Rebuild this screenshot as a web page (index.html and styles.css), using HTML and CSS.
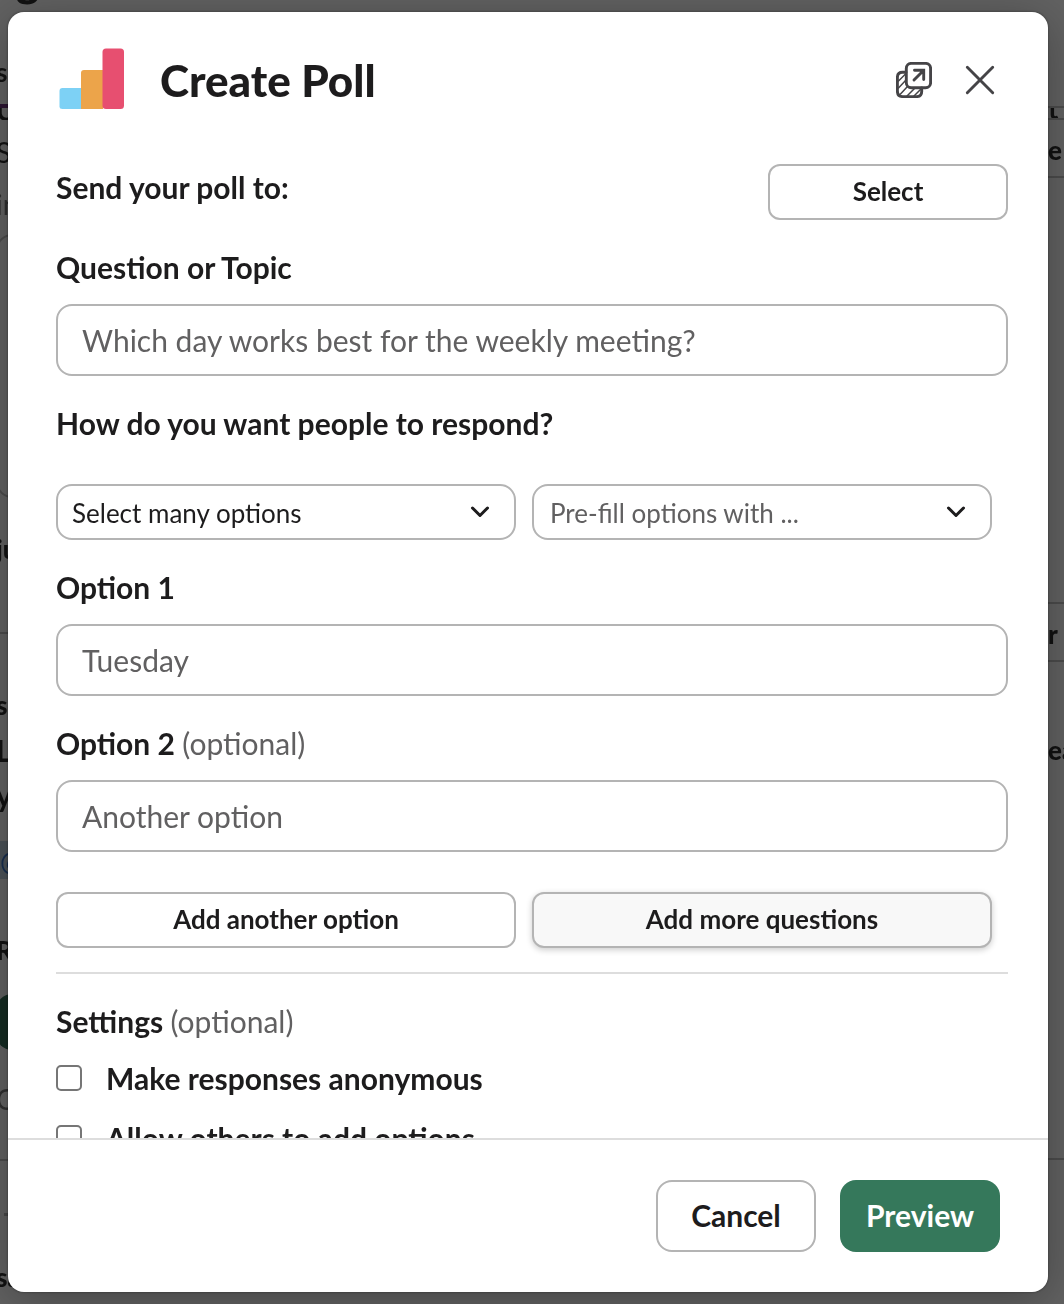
FILE: index.html
```html
<!DOCTYPE html>
<html lang="en">
<head>
  <meta charset="UTF-8">
  <meta name="viewport" content="width=device-width, initial-scale=1.0">
  <title>Create Poll</title>
  <link rel="stylesheet" href="styles.css">
</head>
<body>
  <!-- Dimmed page under the dialog -->
  <div class="page" aria-hidden="true">
    <div class="page-left">
      <div class="page-name">g</div>
      <div class="tab">ss</div>
      <div class="cut"><span>U</span></div>
      <div class="regular">S</div>
      <div class="muted">in</div>
      <div class="box"></div>
      <div class="strong">ju</div>
      <div class="line"></div>
      <div class="strong">s</div>
      <div class="medium">L</div>
      <div class="medium">y</div>
      <div class="mention">@</div>
      <div class="strong">R</div>
      <div class="green"></div>
      <div class="muted">C</div>
      <div class="composer"><span class="dash"></span></div>
      <div class="strong">sa</div>
    </div>
    <div class="page-right">
      <div class="line"></div>
      <div class="cut line"><span>t</span></div>
      <div class="strong line low">e</div>
      <div class="line"></div>
      <div class="strong line low">r</div>
      <div></div>
      <div class="strong">ea</div>
      <div class="line"></div>
      <div></div>
    </div>
  </div>

  <form class="modal" role="dialog" aria-labelledby="title">
    <header class="modal-header">
      <svg class="logo" viewBox="-1 0 66 64" aria-hidden="true">
        <path d="M22 40H3.500Q.5 40 .5 43V58.500Q.5 61 3.500 61H22Z" fill="#7dd1f5"/>
        <path d="M44 22H25Q22 22 22 25V61H44Z" fill="#eca44a"/>
        <rect x="43.500" y=".5" width="21.500" height="60.500" rx="3.500" fill="#e74f70"/>
      </svg>
      <h1 id="title">Create Poll</h1>
      <button class="icon-btn" type="button" aria-label="Open in new window">
        <svg width="36" height="36" viewBox="0 0 36 36" fill="none" stroke="#454447" stroke-width="2.900" stroke-linecap="round" stroke-linejoin="round">
          <path d="M10 10.300H6.500Q1.400 10.300 1.400 15.500V29Q1.400 34.600 7 34.600H20.500Q25.700 34.600 25.700 29.500V26"/>
          <path d="M2.500 19 10 11.500M2.500 26 10 18M4.500 32 11.500 24.500M11 34 18.500 26.500M18 34 25 27" stroke-width="1.500"/>
          <rect x="10.300" y="1.400" width="24.300" height="24.300" rx="5"/>
          <path d="M18 18 27.500 8.500M18.500 8.300H27.700V17.500" stroke-linejoin="miter"/>
        </svg>
      </button>
      <button class="icon-btn" type="button" aria-label="Close">
        <svg width="36" height="36" viewBox="0 0 36 36" fill="none" stroke="#454447" stroke-width="2.900" stroke-linecap="round">
          <path d="M5.300 5.300 30.700 30.700M30.700 5.300 5.300 30.700"/>
        </svg>
      </button>
    </header>

    <div class="modal-body">
      <div class="send-row">
        <span class="label">Send your poll to:</span>
        <button class="btn" type="button">Select</button>
      </div>

      <label class="label" for="question">Question or Topic</label>
      <input class="text" type="text" id="question" placeholder="Which day works best for the weekly meeting?">

      <label class="label" for="respond">How do you want people to respond?</label>
      <div class="pair selects">
        <div class="select-wrap">
          <select id="respond">
            <option>Select many options</option>
          </select>
          <svg class="chevron" viewBox="0 0 20 14" aria-hidden="true"><path d="M2.500 3 10 10.500 17.500 3"/></svg>
        </div>
        <div class="select-wrap">
          <select class="empty" aria-label="Pre-fill options">
            <option>Pre-fill options with ...</option>
          </select>
          <svg class="chevron" viewBox="0 0 20 14" aria-hidden="true"><path d="M2.500 3 10 10.500 17.500 3"/></svg>
        </div>
      </div>

      <label class="label" for="option1">Option 1</label>
      <input class="text" type="text" id="option1" placeholder="Tuesday">

      <label class="label" for="option2">Option 2 <span class="optional">(optional)</span></label>
      <input class="text" type="text" id="option2" placeholder="Another option">

      <div class="pair actions">
        <button class="btn" type="button">Add another option</button>
        <button class="btn raised" type="button">Add more questions</button>
      </div>

      <fieldset class="settings">
        <legend class="label">Settings <span class="optional">(optional)</span></legend>
        <label class="check"><input type="checkbox"> Make responses anonymous</label>
        <label class="check"><input type="checkbox"> Allow others to add options</label>
      </fieldset>
    </div>

    <footer class="modal-footer">
      <button class="btn large" type="button">Cancel</button>
      <button class="btn large primary" type="submit">Preview</button>
    </footer>
  </form>
</body>
</html>
```
FILE: styles.css
```css
* {
  box-sizing: border-box;
}
body {
  margin: 0;
  height: 100vh;
  padding: 12px 16px 12px 8px;
  overflow: hidden;
  background-color: #626262;
  color: #1d1c1d;
  font-family: Lato, sans-serif;
}
button, input, select {
  font-family: inherit;
  color: inherit;
}

/* Dimmed page */
.page {
  position: fixed;
  inset: 0;
  display: flex;
  justify-content: space-between;
  overflow: hidden;
  color: #121212;
  font-size: 28px;
  line-height: 40px;
}
.page-left {
  display: grid;
  width: 44px;
  margin-left: -4px;
  grid-template-rows: 52px 56px 24px 52px 50px 295px 103px 53px 45px 45px 66px 89px 64px 85px 80px 98px 1fr;
}
.page-right {
  display: grid;
  width: 16px;
  grid-template-rows: 108px 12px 58px 426px 58px 68px 40px 390px 1fr;
}
.page-name {
  padding-left: 20px;
  font-size: 44px;
  font-weight: 900;
  line-height: 1px;
  margin-top: -20px;
}
.tab {
  font-weight: 700;
  font-size: 26px;
  border-bottom: 4px solid #2d1533;
}
.cut {
  height: 12px;
  overflow: hidden;
  display: flex;
  align-items: flex-end;
  font-weight: 700;
  line-height: 20px;
}
.strong {
  font-weight: 900;
  font-size: 26px;
}
.medium {
  font-weight: 700;
  font-size: 30px;
}
.low {
  padding-top: 10px;
}
.muted {
  color: #303030;
}
.line {
  border-bottom: 2px solid #4c4c4c;
}
.page-left .line {
  border-bottom: 0;
  border-top: 2px solid #4c4c4c;
}
.box {
  height: 264px;
  border: 2px solid #4c4c4c;
  border-radius: 16px;
}
.mention {
  height: 38px;
  padding-left: 4px;
  background-color: #4c5358;
  color: #172e4f;
}
.green {
  height: 56px;
  border-radius: 16px;
  background-color: #152c23;
}
.composer {
  border-top: 2px solid #4c4c4c;
  padding: 52px 0 0 8px;
}
.dash {
  display: block;
  width: 8px;
  height: 3px;
  background-color: #484848;
}

/* Dialog */
.modal {
  position: relative;
  display: flex;
  flex-direction: column;
  height: 100%;
  overflow: hidden;
  background-color: #fff;
  border-radius: 16px;
  box-shadow: 0 0 2px 1px rgba(0, 0, 0, 0.2), 0 8px 48px rgba(0, 0, 0, 0.3);
}
.modal-header {
  display: flex;
  align-items: center;
  gap: 30px;
  flex: none;
  height: 136px;
  padding: 0 50px;
}
.modal-header h1 {
  flex: 1;
  margin: 0 0 0 6px;
  font-size: 44px;
  font-weight: 900;
  line-height: 56px;
}
.logo {
  width: 66px;
  height: 64px;
}
.icon-btn {
  display: flex;
  padding: 0;
  border: 0;
  background: none;
  cursor: pointer;
}
.modal-body {
  flex: 1;
  min-height: 0;
  overflow-y: auto;
  scrollbar-width: none;
  padding: 16px 40px 0 48px;
}
.label {
  display: block;
  margin: 28px 0 18px;
  font-size: 30px;
  font-weight: 700;
  line-height: 38px;
}
.optional {
  color: #616061;
  font-weight: 400;
}
.send-row {
  display: flex;
  justify-content: space-between;
}
.send-row .label {
  margin: 0;
  line-height: 46px;
}
.send-row .btn {
  width: 240px;
}
.btn {
  height: 56px;
  padding: 0 0 2px;
  border: 2px solid #b4b4b4;
  border-radius: 12px;
  background-color: #fff;
  font-size: 26px;
  font-weight: 700;
  cursor: pointer;
}
.text {
  display: block;
  width: 100%;
  height: 72px;
  padding: 0 24px;
  border: 2px solid #b4b4b4;
  border-radius: 16px;
  font-size: 30px;
}
.text::placeholder {
  color: #616061;
  opacity: 1;
}
.pair {
  display: grid;
  grid-template-columns: 1fr 1fr;
  gap: 16px;
  margin: 40px 16px 0 0;
}
.selects {
  margin-top: 42px;
}
.select-wrap {
  position: relative;
}
select {
  appearance: none;
  display: block;
  width: 100%;
  height: 56px;
  padding: 2px 56px 0 14px;
  border: 2px solid #b4b4b4;
  border-radius: 16px;
  background-color: #fff;
  font-size: 26px;
}
select.empty {
  padding-left: 16px;
  color: #616061;
}
.chevron {
  position: absolute;
  top: 21px;
  right: 26px;
  width: 20px;
  height: 14px;
  fill: none;
  stroke: #1d1c1d;
  stroke-width: 3;
  stroke-linecap: round;
  stroke-linejoin: round;
  pointer-events: none;
}
.raised {
  background-color: #f8f8f8;
  box-shadow: 0 2px 6px rgba(0, 0, 0, 0.2);
}
.settings {
  margin: 24px 0 0;
  padding: 28px 0 0;
  border: 0;
  border-top: 2px solid #ddd;
}
.settings .label {
  float: left;
  width: 100%;
  margin: 0 0 18px;
  padding: 0;
}
.check {
  display: flex;
  align-items: center;
  clear: both;
  gap: 24px;
  margin-bottom: 20px;
  font-size: 30px;
  font-weight: 700;
  line-height: 40px;
}
.check input {
  appearance: none;
  width: 26px;
  height: 26px;
  margin: 0;
  border: 2px solid #767676;
  border-radius: 5px;
}
.modal-footer {
  display: flex;
  justify-content: flex-end;
  gap: 24px;
  flex: none;
  padding: 40px 48px;
  border-top: 2px solid #ddd;
}
.large {
  width: 160px;
  height: 72px;
  border-radius: 16px;
  font-size: 30px;
}
.primary {
  border: 0;
  background-color: #35785b;
  color: #fff;
}
```
